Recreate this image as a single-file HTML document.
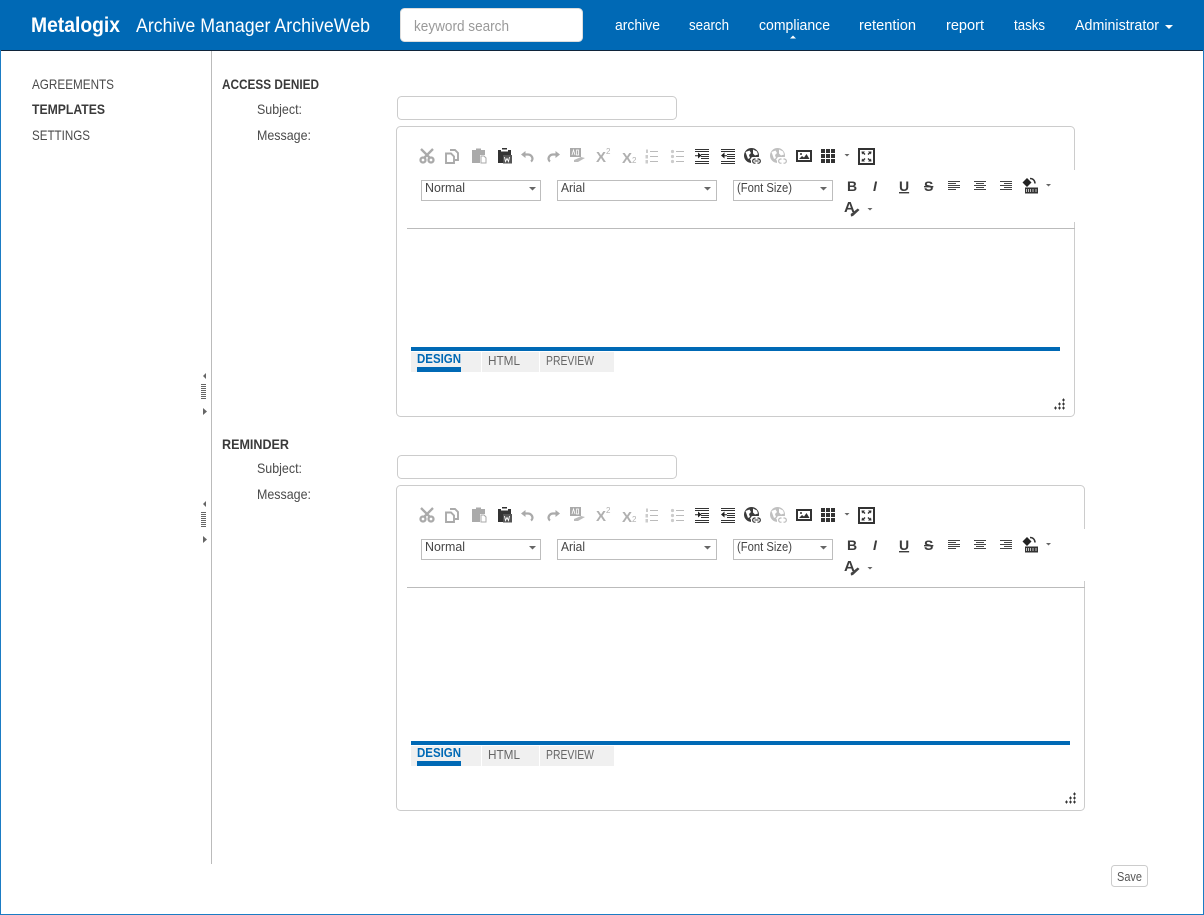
<!DOCTYPE html>
<html><head><meta charset="utf-8"><title>Archive Manager ArchiveWeb</title>
<style>
html,body{margin:0;padding:0;background:#fff}
body{width:1204px;height:915px;overflow:hidden;position:relative}
svg{position:absolute;left:0;top:0;display:block}
text{font-family:"Liberation Sans",sans-serif;fill:#4a4a4a;font-size:14px}
.nav{fill:#fff;font-size:14.5px}
.b{font-weight:bold;fill:#3a3a3a}
.sel{font-size:13px;fill:#444}
.tab{font-size:13px;fill:#666}
.fmt{font-weight:bold;font-size:14px;fill:#3c3c3c}
.sx{font-weight:bold;font-size:15px;fill:#b0b0b0}
.ss{font-size:8px;fill:#b0b0b0}
</style></head><body>
<svg width="1204" height="915" viewBox="0 0 1204 915" xmlns="http://www.w3.org/2000/svg" shape-rendering="geometricPrecision">
<defs>
<g id="icons">
 <!-- cut -->
 <g fill="none" stroke="#aaa" stroke-width="2.300"><circle cx="423" cy="160" r="2.500"/><circle cx="431" cy="160" r="2.500"/><path d="M421 149l9 9M433 149l-9 9"/></g>
 <!-- copy -->
 <g fill="none" stroke="#aaa" stroke-width="1.900"><path d="M450 150h5l3 3v7h-3"/><path d="M446 153.500h5l3 3v6.500h-8z" fill="#fff"/></g>
 <!-- paste -->
 <path d="M472 150h4v-1.500h5v1.500h4v5h-5v8h-8z" fill="#aaa"/><path d="M481 156h3l2 2v5h-5z" fill="#fff" stroke="#aaa"/>
 <!-- paste word -->
 <path d="M498 150h4v-2h5v2h4v13h-13z" fill="#333"/><rect x="501" y="149.500" width="7" height="2" fill="#fff"/><rect x="503" y="155" width="9" height="8.500" fill="#555"/><path d="M504.500 157l1 4.500 1.500-3 1.500 3 1-4.500" fill="none" stroke="#fff" stroke-width=".9"/>
 <!-- undo / redo -->
 <g fill="none" stroke="#aaa" stroke-width="2.200"><path d="M524 154.500h4a4.500 4.500 0 0 1 4.500 4.500a4 4 0 0 1-1.500 2.500"/><path d="M557 154.500h-4a4.500 4.500 0 0 0-4.500 4.500a4 4 0 0 0 1.500 2.500"/></g>
 <path d="M521 154.500l4.500-3.500v7zM560 154.500l-4.500-3.500v7z" fill="#aaa"/>
 <!-- spell -->
 <rect x="570" y="148" width="11" height="9" fill="#aaa"/><path d="M572 155l1.500-5 1.500 5M576.500 150h2v5h-2z" fill="none" stroke="#fff" stroke-width=".8"/><path d="M574 160l7-3 4 1-7 4h-4z" fill="#bbb"/>
 <!-- ol -->
 <g fill="#ccc"><rect x="646" y="149.500" width="2" height="3.500"/><rect x="645.500" y="155" width="2.500" height="3.500"/><rect x="645.500" y="160" width="2.500" height="3.500"/></g>
 <path d="M650 151.500h8M650 156.500h8M650 161.500h8" stroke="#bbb" stroke-width="1"/>
 <!-- ul -->
 <g fill="#ccc"><circle cx="672.500" cy="151.500" r="1.600"/><circle cx="672.500" cy="156.500" r="1.600"/><circle cx="672.500" cy="161.500" r="1.600"/></g>
 <path d="M676 151.500h8M676 156.500h8M676 161.500h8" stroke="#bbb" stroke-width="1"/>
 <!-- indent -->
 <path d="M695 149.500h14M695 151.500h14M701 154.500h8M701 156.500h8M701 158.500h8M695 161.500h14M695 163.500h14" stroke="#333" stroke-width="1" fill="none"/>
 <path d="M695 155.200h3v-2.700l3.500 3-3.500 3v-2.300h-3z" fill="#222"/>
 <!-- outdent -->
 <path d="M721 149.500h14M721 151.500h14M727 154.500h8M727 156.500h8M727 158.500h8M721 161.500h14M721 163.500h14" stroke="#333" stroke-width="1" fill="none"/>
 <path d="M727 155.200h-2.500v-2.700l-3.500 3 3.500 3v-2.300h2.500z" fill="#222"/>
 <!-- link -->
 <circle cx="751.500" cy="155.500" r="7.500" fill="#3a3a3a"/><path d="M745.500 152l4-1.500 1.500 2.500-2 2 1 3-2 1zM753 149.500l4 2 1 3-3 1-2-2zM750 159l3-1 1 4-2 1z" fill="#fff"/>
 <rect x="751" y="157" width="11" height="8" rx="2" fill="#fff"/><rect x="752.700" y="159" width="7.600" height="4.200" rx="2" fill="none" stroke="#333" stroke-width="1.200"/><rect x="755.500" y="158" width="2" height="1.800" fill="#fff"/><rect x="755.500" y="162.500" width="2" height="1.800" fill="#fff"/><path d="M754.500 161h4" stroke="#333" stroke-width="1"/>
 <!-- unlink -->
 <circle cx="777.500" cy="155.500" r="7.500" fill="#c0c0c0"/><path d="M771.500 152l4-1.500 1.500 2.500-2 2 1 3-2 1zM779 149.500l4 2 1 3-3 1-2-2zM776 159l3-1 1 4-2 1z" fill="#fff"/>
 <rect x="777" y="157" width="11" height="8" rx="2" fill="#fff"/><rect x="778.700" y="159" width="7.600" height="4.200" rx="2" fill="none" stroke="#bbb" stroke-width="1.200"/><rect x="781.500" y="158" width="2" height="1.800" fill="#fff"/><rect x="781.500" y="162.500" width="2" height="1.800" fill="#fff"/>
 <!-- image -->
 <rect x="796" y="150" width="16" height="12" fill="#333"/><rect x="798" y="152" width="12" height="8" fill="#fff"/><path d="M799 159l3-3 2 1.500 2.500-3.500 3 5z" fill="#333"/><circle cx="801" cy="154" r="1" fill="#333"/>
 <!-- table -->
 <g fill="#333"><rect x="821" y="149" width="4" height="4"/><rect x="826" y="149" width="4" height="4"/><rect x="831" y="149" width="4" height="4"/><rect x="821" y="154" width="4" height="4"/><rect x="826" y="154" width="4" height="4"/><rect x="831" y="154" width="4" height="4"/><rect x="821" y="159" width="4" height="4"/><rect x="826" y="159" width="4" height="4"/><rect x="831" y="159" width="4" height="4"/></g>
 <path d="M844.500 154h5l-2.500 2.500z" fill="#666"/>
 <!-- fullscreen -->
 <rect x="859" y="149" width="15" height="15" fill="none" stroke="#333" stroke-width="2"/>
 <path d="M861.500 151.500h3.500l-1 1 1.500 1.500-1 1-1.500-1.500-1 1zM871.500 151.500h-3.500l1 1-1.500 1.500 1 1 1.500-1.500 1 1zM861.500 161.500h3.500l-1-1 1.500-1.500-1-1-1.500 1.500-1-1zM871.500 161.500h-3.500l1-1-1.500-1.500 1-1 1.500 1.500 1-1z" fill="#333"/>
 <!-- align -->
 <g stroke="#444" stroke-width="1" fill="none">
 <path d="M948 181.500h12M948 183.500h8M948 185.500h12M948 187.500h12M948 189.500h8"/>
 <path d="M974 181.500h12M976 183.500h8M974 185.500h12M976 187.500h8M974 189.500h12"/>
 <path d="M1000 181.500h12M1004 183.500h8M1000 185.500h12M1004 187.500h8M1000 189.500h12"/>
 </g>
 <!-- highlight -->
 <path d="M1027 178l4.500 4.500-4.500 4.500-4.500-4.500z" fill="#222"/><path d="M1030 178.500c3 0 5 2 5 5" fill="none" stroke="#333" stroke-width="1.500"/>
 <rect x="1025" y="187.500" width="13" height="6" fill="#333"/><path d="M1026.500 189v3M1028.500 189v3M1030.500 189v3M1033 189v3M1036 189v3" stroke="#fff" stroke-width=".7"/>
 <path d="M1046 184h5l-2.500 2.500z" fill="#666"/>
 <!-- font colour -->
 <path d="M851 216.500l-.3-2.500 7-5.500 1.800 1.500-6.500 6z" fill="#444"/>
 <path d="M867.500 208h5l-2.500 2.500z" fill="#666"/>
 <!-- grip -->
 <g fill="#333"><path d="M1063 398.500h1v1h-1zM1062 399.500h3v1h-3zM1063 400.500h1v1h-1z"/><path d="M1063 402.500h1v1h-1zM1062 403.500h3v1h-3zM1063 404.500h1v1h-1z"/><path d="M1059 402.500h1v1h-1zM1058 403.500h3v1h-3zM1059 404.500h1v1h-1z"/><path d="M1063 406.500h1v1h-1zM1062 407.500h3v1h-3zM1063 408.500h1v1h-1z"/><path d="M1059 406.500h1v1h-1zM1058 407.500h3v1h-3zM1059 408.500h1v1h-1z"/><path d="M1055 406.500h1v1h-1zM1054 407.500h3v1h-3zM1055 408.500h1v1h-1z"/></g>
</g>
<g id="split" fill="#666">
 <path d="M206 373v6l-3-3z"/>
 <path d="M201 384.500h5M201 386.500h5M201 388.500h5M201 390.500h5M201 392.500h5M201 394.500h5M201 396.500h5M201 398.500h5" stroke="#666" stroke-width="1"/>
 <path d="M203 408v7l4-3.500z"/>
</g>
</defs>

<!-- page frame -->
<rect x="0.500" y="0.500" width="1203" height="914" fill="#fff" stroke="#1b7cc4"/>
<rect x="0" y="0" width="1204" height="50" fill="#0069b5"/>
<rect x="1" y="50" width="1202" height="1" fill="#10243a"/>
<rect x="211" y="51" width="1" height="813" fill="#bbb"/>

<!-- header -->
<text x="31" y="32" class="b" style="fill:#fff;font-size:21px" textLength="89" lengthAdjust="spacingAndGlyphs">Metalogix</text>
<text x="136" y="32" style="fill:#fff;font-size:19px" textLength="234" lengthAdjust="spacingAndGlyphs">Archive Manager ArchiveWeb</text>
<rect x="400.500" y="8.500" width="182" height="33" rx="4" fill="#fff" stroke="#ddd"/>
<text x="414" y="31" style="fill:#999;font-size:15px" textLength="95" lengthAdjust="spacingAndGlyphs">keyword search</text>
<text x="615" y="30" class="nav" textLength="45" lengthAdjust="spacingAndGlyphs">archive</text>
<text x="689" y="30" class="nav" textLength="40" lengthAdjust="spacingAndGlyphs">search</text>
<text x="759" y="30" class="nav" textLength="71" lengthAdjust="spacingAndGlyphs">compliance</text>
<text x="859" y="30" class="nav" textLength="57" lengthAdjust="spacingAndGlyphs">retention</text>
<text x="946" y="30" class="nav" textLength="38" lengthAdjust="spacingAndGlyphs">report</text>
<text x="1014" y="30" class="nav" textLength="31" lengthAdjust="spacingAndGlyphs">tasks</text>
<text x="1075" y="30" class="nav" textLength="84" lengthAdjust="spacingAndGlyphs">Administrator</text>
<path d="M1165 25h8l-4 4z" fill="#fff"/>
<path d="M790 38.500h6l-3-3z" fill="#fff"/>

<!-- sidebar -->
<text x="32" y="89" textLength="82" lengthAdjust="spacingAndGlyphs">AGREEMENTS</text>
<text x="32" y="114" class="b" textLength="73" lengthAdjust="spacingAndGlyphs">TEMPLATES</text>
<text x="32" y="140" textLength="58" lengthAdjust="spacingAndGlyphs">SETTINGS</text>
<use href="#split"/>
<use href="#split" y="128"/>

<!-- section 1 -->
<text x="222" y="89" class="b" textLength="97" lengthAdjust="spacingAndGlyphs">ACCESS DENIED</text>
<text x="257" y="114" textLength="45" lengthAdjust="spacingAndGlyphs">Subject:</text>
<text x="257" y="140" textLength="54" lengthAdjust="spacingAndGlyphs">Message:</text>
<rect x="397.500" y="96.500" width="279" height="23" rx="4" fill="#fff" stroke="#ccc"/>
<rect x="396.500" y="126.500" width="678" height="290" rx="4" fill="#fff" stroke="#ccc"/>
<rect x="1070" y="170" width="7" height="52" fill="#fff"/>
<rect x="407" y="228" width="668" height="1" fill="#bbb"/>
<rect x="421.500" y="180.500" width="119" height="20" fill="#fff" stroke="#bdbdbd"/>
<rect x="557.500" y="180.500" width="159" height="20" fill="#fff" stroke="#bdbdbd"/>
<rect x="733.500" y="180.500" width="99" height="20" fill="#fff" stroke="#bdbdbd"/>
<text x="425" y="192" class="sel" textLength="40" lengthAdjust="spacingAndGlyphs">Normal</text>
<text x="561" y="192" class="sel" textLength="24" lengthAdjust="spacingAndGlyphs">Arial</text>
<text x="737" y="192" class="sel" textLength="55" lengthAdjust="spacingAndGlyphs">(Font Size)</text>
<path d="M529 187h7l-3.500 3.500zM704 187h7l-3.500 3.500zM820 187h7l-3.500 3.500z" fill="#666"/>
<use href="#icons"/>
<text x="596" y="162" class="sx">X</text><text x="606" y="154" class="ss">2</text>
<text x="622" y="163" class="sx">X</text><text x="632" y="163" class="ss">2</text>
<text x="847" y="191" class="fmt">B</text>
<text x="873" y="191" class="fmt" font-style="italic">I</text>
<text x="899" y="191" class="fmt" text-decoration="underline">U</text>
<text x="924" y="191" class="fmt" text-decoration="line-through">S</text>
<text x="844" y="212" class="fmt" style="font-size:15px">A</text>
<rect x="411" y="347" width="649" height="4" fill="#0069b5"/>
<rect x="411" y="352" width="70" height="20" fill="#f0f0f0"/><rect x="482" y="352" width="57" height="20" fill="#f0f0f0"/><rect x="540" y="352" width="74" height="20" fill="#f0f0f0"/>
<rect x="417" y="367" width="44" height="5" fill="#0069b5"/>
<text x="417" y="363" class="b" style="fill:#0069b5;font-size:13px" textLength="44" lengthAdjust="spacingAndGlyphs">DESIGN</text>
<text x="488" y="365" class="tab" textLength="32" lengthAdjust="spacingAndGlyphs">HTML</text>
<text x="546" y="365" class="tab" textLength="48" lengthAdjust="spacingAndGlyphs">PREVIEW</text>

<!-- section 2 -->
<text x="222" y="449" class="b" textLength="67" lengthAdjust="spacingAndGlyphs">REMINDER</text>
<text x="257" y="473" textLength="45" lengthAdjust="spacingAndGlyphs">Subject:</text>
<text x="257" y="499" textLength="54" lengthAdjust="spacingAndGlyphs">Message:</text>
<rect x="397.500" y="455.500" width="279" height="23" rx="4" fill="#fff" stroke="#ccc"/>
<rect x="396.500" y="485.500" width="688" height="325" rx="4" fill="#fff" stroke="#ccc"/>
<rect x="1080" y="529" width="7" height="52" fill="#fff"/>
<rect x="407" y="587" width="678" height="1" fill="#bbb"/>
<rect x="421.500" y="539.500" width="119" height="20" fill="#fff" stroke="#bdbdbd"/>
<rect x="557.500" y="539.500" width="159" height="20" fill="#fff" stroke="#bdbdbd"/>
<rect x="733.500" y="539.500" width="99" height="20" fill="#fff" stroke="#bdbdbd"/>
<text x="425" y="551" class="sel" textLength="40" lengthAdjust="spacingAndGlyphs">Normal</text>
<text x="561" y="551" class="sel" textLength="24" lengthAdjust="spacingAndGlyphs">Arial</text>
<text x="737" y="551" class="sel" textLength="55" lengthAdjust="spacingAndGlyphs">(Font Size)</text>
<path d="M529 546h7l-3.500 3.500zM704 546h7l-3.500 3.500zM820 546h7l-3.500 3.500z" fill="#666"/>
<g transform="translate(0,359)">
<use href="#icons"/>
<text x="596" y="162" class="sx">X</text><text x="606" y="154" class="ss">2</text>
<text x="622" y="163" class="sx">X</text><text x="632" y="163" class="ss">2</text>
<text x="847" y="191" class="fmt">B</text>
<text x="873" y="191" class="fmt" font-style="italic">I</text>
<text x="899" y="191" class="fmt" text-decoration="underline">U</text>
<text x="924" y="191" class="fmt" text-decoration="line-through">S</text>
<text x="844" y="212" class="fmt" style="font-size:15px">A</text>
</g>
<rect x="1050" y="755" width="25" height="16" fill="#fff"/>
<rect x="411" y="741" width="659" height="4" fill="#0069b5"/>
<rect x="411" y="746" width="70" height="20" fill="#f0f0f0"/><rect x="482" y="746" width="57" height="20" fill="#f0f0f0"/><rect x="540" y="746" width="74" height="20" fill="#f0f0f0"/>
<rect x="417" y="761" width="44" height="5" fill="#0069b5"/>
<text x="417" y="757" class="b" style="fill:#0069b5;font-size:13px" textLength="44" lengthAdjust="spacingAndGlyphs">DESIGN</text>
<text x="488" y="759" class="tab" textLength="32" lengthAdjust="spacingAndGlyphs">HTML</text>
<text x="546" y="759" class="tab" textLength="48" lengthAdjust="spacingAndGlyphs">PREVIEW</text>
<g fill="#333" transform="translate(11,2)"><path d="M1063 790.500h1v1h-1zM1062 791.500h3v1h-3zM1063 792.500h1v1h-1z"/><path d="M1063 794.500h1v1h-1zM1062 795.500h3v1h-3zM1063 796.500h1v1h-1z"/><path d="M1059 794.500h1v1h-1zM1058 795.500h3v1h-3zM1059 796.500h1v1h-1z"/><path d="M1063 798.500h1v1h-1zM1062 799.500h3v1h-3zM1063 800.500h1v1h-1z"/><path d="M1059 798.500h1v1h-1zM1058 799.500h3v1h-3zM1059 800.500h1v1h-1z"/><path d="M1055 798.500h1v1h-1zM1054 799.500h3v1h-3zM1055 800.500h1v1h-1z"/></g>

<!-- save -->
<rect x="1111.500" y="865.500" width="36" height="21" rx="3" fill="#fff" stroke="#ccc"/>
<text x="1117" y="881" style="font-size:13px;fill:#555" textLength="25" lengthAdjust="spacingAndGlyphs">Save</text>
</svg>
</body></html>
